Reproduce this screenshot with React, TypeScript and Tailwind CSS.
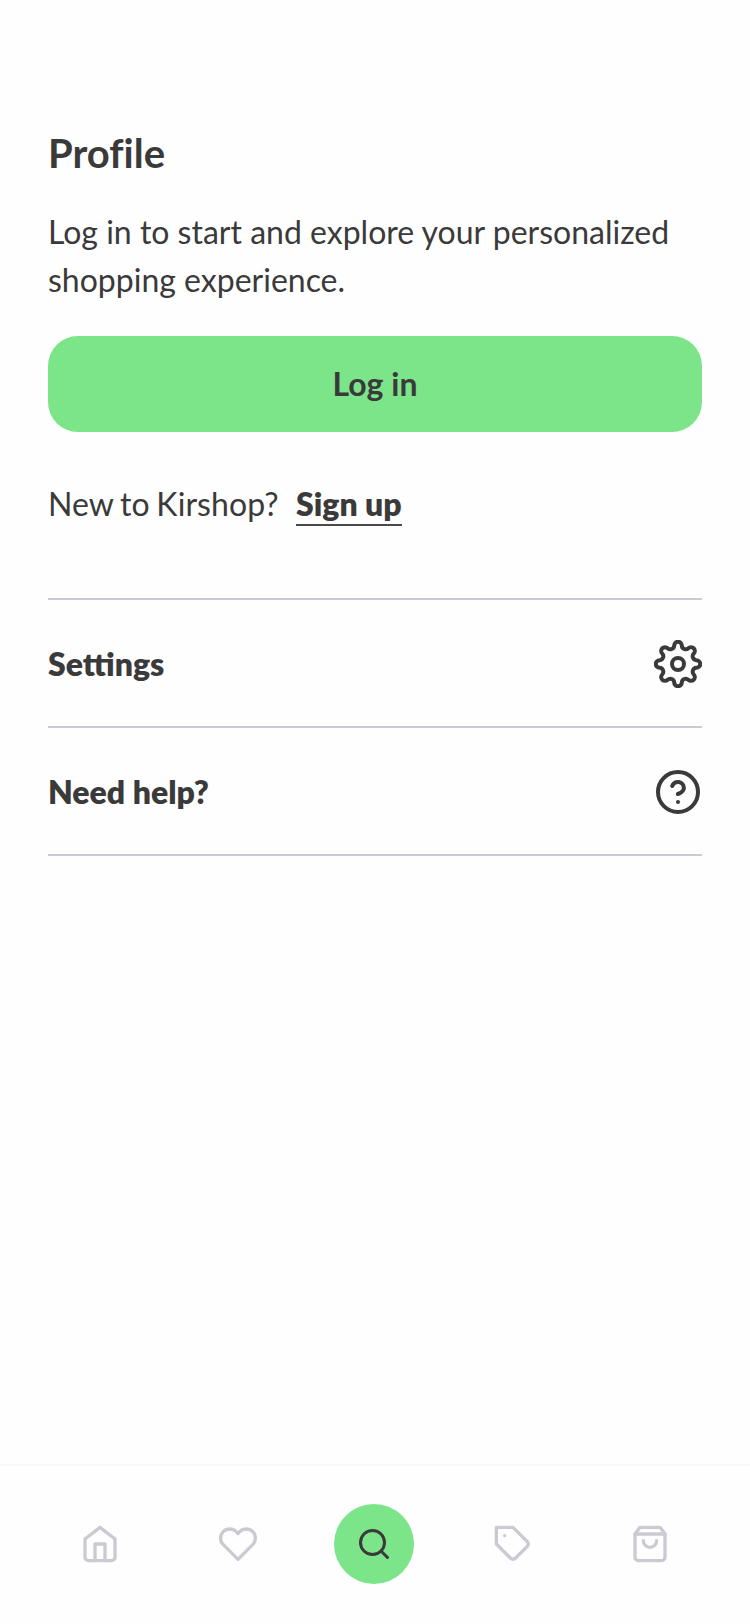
import type { ReactNode } from "react";

type IconProps = { size: number; children: ReactNode };

function Icon({ size, children }: IconProps) {
  return (
    <svg
      width={size}
      height={size}
      viewBox="0 0 24 24"
      fill="none"
      stroke="currentColor"
      strokeWidth={2}
      strokeLinecap="round"
      strokeLinejoin="round"
    >
      {children}
    </svg>
  );
}

// Eight rounded teeth joined by rounded valleys, centred in a 48-unit box.
const gearPoint = (degrees: number) => {
  const angle = ((degrees - 90) * Math.PI) / 180;
  return `${(24 + 18.82 * Math.cos(angle)).toFixed(2)} ${(24 + 18.82 * Math.sin(angle)).toFixed(2)}`;
};

const gearPath =
  `M${gearPoint(-11.69)}` +
  Array.from({ length: 8 }, (_, i) => {
    const tooth = i * 45;
    return `A3.8 3.8 0 0 1 ${gearPoint(tooth + 11.69)}A3.9 3.9 0 0 0 ${gearPoint(tooth + 33.31)}`;
  }).join("") +
  "Z";

function GearIcon() {
  return (
    <svg width={48} height={48} viewBox="0 0 48 48" fill="none" stroke="currentColor" strokeWidth={4}>
      <circle cx="24" cy="24" r="6" />
      <path d={gearPath} />
    </svg>
  );
}

function HelpIcon() {
  return (
    <Icon size={48}>
      <circle cx="12" cy="12" r="10" />
      <path d="M9.090 9a3 3 0 0 1 5.830 1c0 2-3 3-3 3" />
      <path d="M12 17h.01" />
    </Icon>
  );
}

function MenuRow({ label, icon }: { label: string; icon: ReactNode }) {
  return (
    <button className="flex h-32 w-full items-center justify-between border-b-2 border-[#cbcad3] pt-0.5 text-[32px] font-extrabold">
      <span className="leading-[48px]">{label}</span>
      {icon}
    </button>
  );
}

function Tab({ children }: { children: ReactNode }) {
  return <div className="flex size-20 items-center justify-center">{children}</div>;
}

export default function App() {
  return (
    <div className="flex h-[1624px] w-[750px] flex-col bg-[#fefefe] font-['Lato',sans-serif] text-[#3a3a3a]">
      <main className="flex-1 px-12 pt-[123px]">
        <h1 className="text-[40px] leading-[60px] font-bold [font-variant-ligatures:none]">Profile</h1>
        <p className="mt-[25px] text-[32px] leading-[48px]">
          Log in to start and explore your personalized shopping experience.
        </p>
        <button className="mt-8 h-24 w-full rounded-[30px] bg-[#7ce58a] text-[32px] font-bold">Log in</button>
        <div className="mt-12 flex items-center text-[32px] leading-[48px]">
          <span className="w-[248px] tracking-[0.1px] [word-spacing:-1.7px]">New to Kirshop?</span>
          <a className="relative font-extrabold">
            Sign up
            <span className="absolute inset-x-0 bottom-0.5 h-0.5 bg-[#4a4a4a]" />
          </a>
        </div>
        <div className="mt-[70px] border-t-2 border-[#cbcad3]">
          <MenuRow label="Settings" icon={<GearIcon />} />
          <MenuRow label="Need help?" icon={<HelpIcon />} />
        </div>
      </main>

      <nav className="flex h-40 items-center justify-between border-t-2 border-[#f8f8f8] px-[60px] pb-0.5 text-[#cbcad3]">
        <Tab>
          <Icon size={40}>
            <path d="M3 9l9-7 9 7v11a2 2 0 0 1-2 2H5a2 2 0 0 1-2-2z" />
            <path d="M9 22V12h6v10" />
          </Icon>
        </Tab>
        <Tab>
          <Icon size={40}>
            <path d="M20.840 4.610a5.500 5.500 0 0 0-7.780 0L12 5.670l-1.060-1.060a5.500 5.500 0 0 0-7.780 7.780l1.060 1.060L12 21.230l7.780-7.780 1.060-1.060a5.500 5.500 0 0 0 0-7.780z" />
          </Icon>
        </Tab>
        <span className="mr-px -ml-px flex size-20 items-center justify-center rounded-full bg-[#7ce58a] text-[#3a3a3a]">
          <Icon size={36}>
            <circle cx="11" cy="11" r="8" />
            <path d="M21 21l-4.350-4.350" />
          </Icon>
        </span>
        <Tab>
          <Icon size={40}>
            <path d="M20.590 13.410l-7.170 7.170a2 2 0 0 1-2.830 0L2 12V2h10l8.590 8.590a2 2 0 0 1 0 2.820z" />
            <path d="M7 7h.01" />
          </Icon>
        </Tab>
        <Tab>
          <Icon size={40}>
            <path d="M6 2L3 6v14a2 2 0 0 0 2 2h14a2 2 0 0 0 2-2V6l-3-4z" />
            <path d="M3 6h18M16 10a4 4 0 0 1-8 0" />
          </Icon>
        </Tab>
      </nav>
    </div>
  );
}
